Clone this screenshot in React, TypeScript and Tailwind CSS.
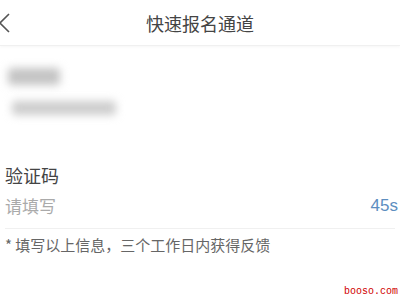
import React from 'react';

const CJK = { fontFamily: '"Noto Sans CJK SC", "Noto Sans", sans-serif' };

export default function App() {
  return (
    <div className="relative w-[400px] h-[300px] overflow-hidden bg-white text-[#333]" style={CJK}>
      {/* header */}
      <div className="relative flex items-center justify-center h-[46px] border-b border-[#f0f0f0] shadow-[0_1px_3px_rgba(0,0,0,0.04)]">
        <svg className="absolute left-[-2px] top-[12px]" width="14" height="22" viewBox="0 0 14 22" fill="none">
          <path d="M11 2 L2 11 L11 20" stroke="#555" strokeWidth="1.6" />
        </svg>
        <span className="text-[18px] leading-none text-[#444] mt-[1px]">快速报名通道</span>
      </div>

      {/* blurred personal info */}
      <div className="flex flex-col gap-[16px] px-[8px] pt-[22px]">
        <div className="w-[52px] h-[17px] rounded bg-[#c4c4c4] blur-[4px]" />
        <div className="ml-[4px] w-[104px] h-[14px] rounded bg-[#cdcdcd] blur-[4px]" />
      </div>

      {/* verification code */}
      <div className="mt-[49px] px-[5px]">
        <div className="text-[18px] leading-[22px] text-[#444]">验证码</div>
        <div className="flex items-center justify-between mt-[9px] pb-[11px] border-b border-[#f0f0f0]">
          <span className="text-[17px] leading-[22px] text-[#aaa]">请填写</span>
          <span className="text-[17px] leading-[22px] text-[#5d8ec0] mr-[-3px]" style={{ fontFamily: '"Liberation Sans", Arial, sans-serif' }}>
            45s
          </span>
        </div>
        <div className="mt-[6px] text-[15px] leading-[19px] text-[#666]">* 填写以上信息，三个工作日内获得反馈</div>
      </div>

      {/* watermark */}
      <div
        className="absolute right-[2px] bottom-[3px] text-[10px] leading-none text-[#d00000]"
        style={{ fontFamily: '"Liberation Mono", monospace' }}
      >
        booso.com
      </div>
    </div>
  );
}
